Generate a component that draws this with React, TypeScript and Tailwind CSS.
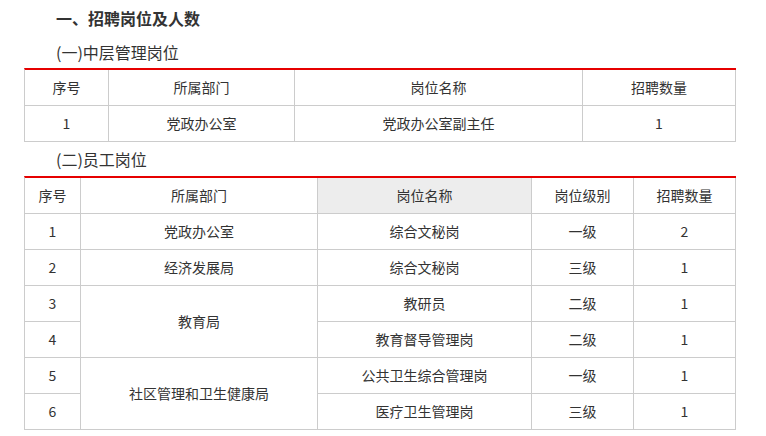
import React from "react";

const cell = "border-r border-b border-[#cccccc] h-[36px] p-0 text-center align-middle font-normal";

export default function App() {
  const rows2: { n: string; dept?: string; span?: number; post: string; level: string; num: string }[] = [
    { n: "1", dept: "党政办公室", span: 1, post: "综合文秘岗", level: "一级", num: "2" },
    { n: "2", dept: "经济发展局", span: 1, post: "综合文秘岗", level: "三级", num: "1" },
    { n: "3", dept: "教育局", span: 2, post: "教研员", level: "二级", num: "1" },
    { n: "4", post: "教育督导管理岗", level: "二级", num: "1" },
    { n: "5", dept: "社区管理和卫生健康局", span: 2, post: "公共卫生综合管理岗", level: "一级", num: "1" },
    { n: "6", post: "医疗卫生管理岗", level: "三级", num: "1" },
  ];
  return (
    <div
      className="w-[766px] h-[436px] bg-white text-[#333333] overflow-hidden"
      style={{ fontFamily: '"Microsoft YaHei", "Noto Sans CJK SC", "Noto Sans", sans-serif' }}
    >
      <div className="pl-[24px] w-[736px]">
        <div className="pl-[32px] h-[35px] flex items-center text-[16px] font-bold">一、招聘岗位及人数</div>
        <div className="pl-[32px] h-[33px] flex items-center text-[16px]">(一)中层管理岗位</div>
        <table className="table-fixed border-separate border-spacing-0 w-[712px] border-t-2 border-t-[#e60000] border-l border-l-[#cccccc] text-[14px]">
          <colgroup>
            <col className="w-[84px]" />
            <col className="w-[186px]" />
            <col className="w-[288px]" />
            <col className="w-[153px]" />
          </colgroup>
          <tbody>
            <tr>
              <td className={cell}>序号</td>
              <td className={cell}>所属部门</td>
              <td className={cell}>岗位名称</td>
              <td className={cell}>招聘数量</td>
            </tr>
            <tr>
              <td className={cell}>1</td>
              <td className={cell}>党政办公室</td>
              <td className={cell}>党政办公室副主任</td>
              <td className={cell}>1</td>
            </tr>
          </tbody>
        </table>
        <div className="pl-[32px] h-[34px] flex items-center text-[16px]">(二)员工岗位</div>
        <table className="table-fixed border-separate border-spacing-0 w-[712px] border-t-2 border-t-[#e60000] border-l border-l-[#cccccc] text-[14px]">
          <colgroup>
            <col className="w-[56px]" />
            <col className="w-[237px]" />
            <col className="w-[214px]" />
            <col className="w-[102px]" />
            <col className="w-[102px]" />
          </colgroup>
          <tbody>
            <tr>
              <td className={cell}>序号</td>
              <td className={cell}>所属部门</td>
              <td className={`${cell} bg-[#ededed]`}>岗位名称</td>
              <td className={cell}>岗位级别</td>
              <td className={cell}>招聘数量</td>
            </tr>
            {rows2.map((r) => (
              <tr key={r.n}>
                <td className={cell}>{r.n}</td>
                {r.dept && (
                  <td className={cell} rowSpan={r.span}>
                    {r.dept}
                  </td>
                )}
                <td className={cell}>{r.post}</td>
                <td className={cell}>{r.level}</td>
                <td className={cell}>{r.num}</td>
              </tr>
            ))}
          </tbody>
        </table>
      </div>
    </div>
  );
}
